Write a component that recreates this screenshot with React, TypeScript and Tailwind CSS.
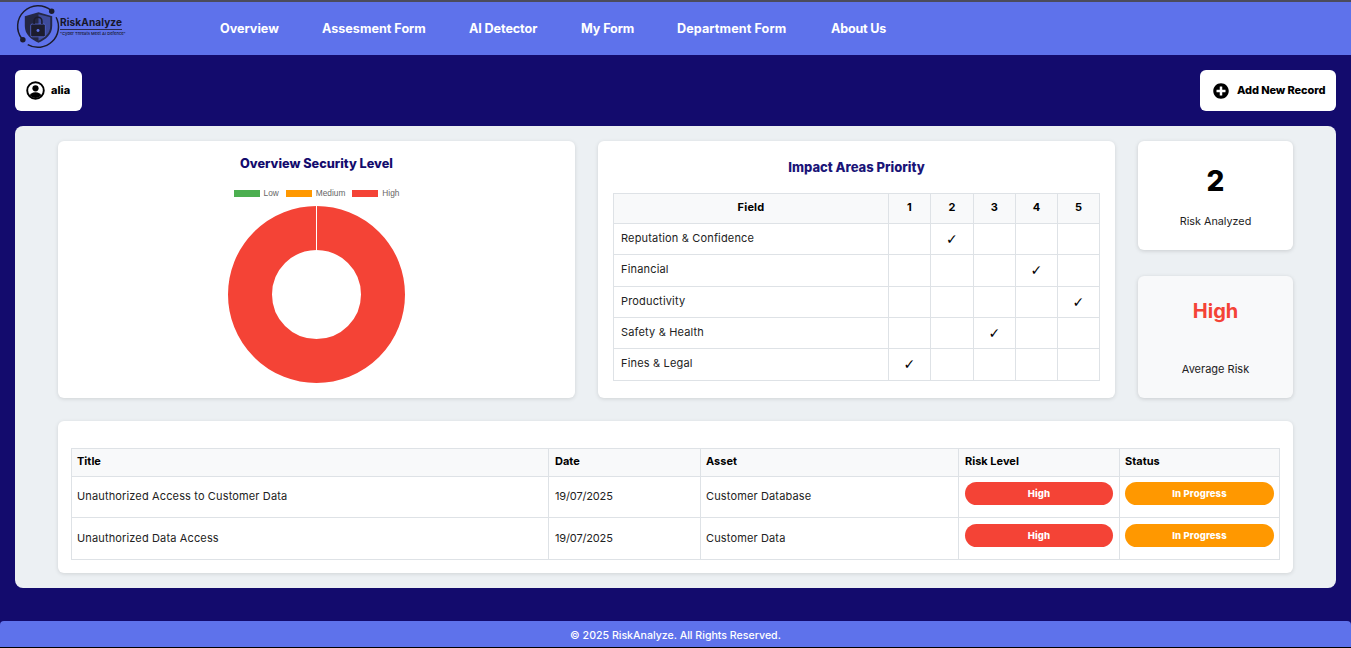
import React from "react";
import { FaPlusCircle } from "react-icons/fa";

const F = "[font-family:Inter,'Noto_Sans',sans-serif]";
const navItems = [
  ["Overview", "w-[59px]", ""],
  ["Assesment Form", "w-[104px]", ""],
  ["AI Detector", "w-[69px]", "tracking-[-0.1px]"],
  ["My Form", "w-[53px]", "tracking-[-0.1px]"],
  ["Department Form", "w-[111px]", "tracking-[0.1px]"],
  ["About Us", "w-[55px]", "tracking-[-0.2px]"],
];
const impact: [string, number, string][] = [
  ["Reputation & Confidence", 2, "h-[31px]"],
  ["Financial", 4, "h-[32px]"],
  ["Productivity", 5, "h-[31px]"],
  ["Safety & Health", 3, "h-[31px]"],
  ["Fines & Legal", 1, "h-[32px]"],
];
const records = [
  ["Unauthorized Access to Customer Data", "19/07/2025", "Customer Database", "h-[41px]", "pt-[5px]", "pb-[2px]"],
  ["Unauthorized Data Access", "19/07/2025", "Customer Data", "h-[42px]", "pt-[6px]", "pb-0"],
];

function Logo() {
  return (
    <div className="flex items-center w-[110px] h-[46px] ml-[16px] mt-[-4px]">
      <svg width="45" height="46" viewBox="0 0 46 46" className="shrink-0" fill="none">
        <path d="M6 35A21 21 0 0 1 36 6" stroke="#1c1c2e" strokeWidth="1.5" />
        <path d="M41 13A21 21 0 0 1 12 41" stroke="#1c1c2e" strokeWidth="1.5" />
        <circle cx="36.5" cy="7" r="2.8" fill="#1c1c2e" />
        <circle cx="7" cy="36" r="2.8" fill="#1c1c2e" />
        <path d="M23 8l14 4v10c0 9-7 14-14 17-7-3-14-8-14-17V12z" fill="#1c1c2e" fillOpacity="0.88" />
        <path d="M23 10v27c7-3 12-8 12-15V13z" fill="#4a5bc0" fillOpacity="0.7" />
        <rect x="15" y="20" width="15" height="13" rx="1.5" fill="#1c1c2e" stroke="#5e72eb" strokeWidth="0.7" />
        <path d="M18.5 20v-3a4 4 0 0 1 8 0v3" stroke="#1c1c2e" strokeWidth="1.6" />
        <circle cx="22.5" cy="26.5" r="1.5" fill="#5e72eb" />
      </svg>
      <div className="ml-[-1px] mt-[-1px] flex flex-col whitespace-nowrap">
        <span className="text-[10.1px] leading-[12px] font-bold text-[#16162a] border-b border-[#2a2a50] pb-[1px] tracking-[0.1px] self-start">RiskAnalyze</span>
        <span className="text-[4.1px] leading-[7px] font-medium text-[#16162a]">"Cyber Threats Meet AI Defence"</span>
      </div>
    </div>
  );
}

function UserIcon() {
  return (
    <svg width="19" height="19" viewBox="0 0 19 19" className="shrink-0">
      <defs>
        <clipPath id="userClip">
          <circle cx="9.5" cy="9.5" r="7.5" />
        </clipPath>
      </defs>
      <circle cx="9.5" cy="9.5" r="8.3" fill="#ffffff" stroke="#000000" strokeWidth="1.9" />
      <circle cx="9.5" cy="7.3" r="3.1" fill="#000000" />
      <ellipse cx="9.5" cy="15.5" rx="6" ry="4.2" fill="#000000" clipPath="url(#userClip)" />
    </svg>
  );
}

function Donut() {
  return (
    <svg width="177" height="177" viewBox="0 0 177 177" className="mt-[9px] block">
      <circle cx="88.5" cy="88.5" r="66.5" fill="none" stroke="#f44336" strokeWidth="44" />
      <line x1="88.5" y1="0" x2="88.5" y2="44.5" stroke="#ffffff" strokeWidth="1" />
    </svg>
  );
}

export default function App() {
  return (
    <div className={`${F} h-[648px] overflow-hidden bg-[#130b6d] flex flex-col`}>
      <header className="h-[55px] shrink-0 bg-[#5e72eb] border-t-2 border-[#4b4b5c] flex items-center">
        <Logo />
        <nav className="ml-[94px] flex gap-[43px] text-[12.6px] font-bold text-white mt-[1px]">
          {navItems.map(([n, w, t]) => (
            <span key={n} className={`${w} ${t} whitespace-nowrap`}>{n}</span>
          ))}
        </nav>
      </header>

      <div className="px-[15px] pt-[15px] flex justify-between">
        <div className="h-[41px] w-[67px] bg-white rounded-[6px] flex items-center pl-[11px] gap-[6px] text-[11px] font-extrabold text-black">
          <UserIcon />
          <span>alia</span>
        </div>
        <div className="h-[41px] w-[136px] bg-white rounded-[6px] flex items-center pl-[13px] gap-[8px] text-[11px] font-extrabold text-black whitespace-nowrap">
          <FaPlusCircle className="text-[16px]" />
          <span className="tracking-[-0.1px]">Add New Record</span>
        </div>
      </div>

      <main className="mx-[15px] mt-[15px] h-[462px] bg-[#ecf0f3] rounded-[8px] px-[43px] pt-[15px]">
        <div className="flex gap-[23px] h-[257px]">
          <section className="w-[517px] bg-white rounded-[6px] shadow-[0_1px_4px_rgba(0,0,0,0.12)] flex flex-col items-center pt-[15px]">
            <h2 className="text-[12.7px] leading-[16px] font-extrabold text-[#130b6d]">Overview Security Level</h2>
            <div className="mt-[17px] flex items-center h-[8px] text-[8.3px] text-[#666] [font-family:'Liberation_Sans',sans-serif]">
              <i className="block w-[26px] h-[7px] bg-[#4caf50]" />
              <span className="ml-[4px]">Low</span>
              <i className="block ml-[7px] w-[26px] h-[7px] bg-[#ff9800]" />
              <span className="ml-[4px]">Medium</span>
              <i className="block ml-[7px] w-[26px] h-[7px] bg-[#f44336]" />
              <span className="ml-[4px]">High</span>
            </div>
            <Donut />
          </section>

          <section className="w-[517px] bg-white rounded-[6px] shadow-[0_1px_4px_rgba(0,0,0,0.12)] px-[15px] pt-[18px]">
            <h2 className="text-center text-[13px] leading-[16px] font-extrabold text-[#1a1478]">Impact Areas Priority</h2>
            <table className="mt-[18px] w-[486px] table-fixed border-collapse text-[11px] text-[#222] tracking-[0.17px]">
              <colgroup>
                <col className="w-[275px]" />
                <col className="w-[42px]" />
                <col className="w-[43px]" />
                <col className="w-[42px]" />
                <col className="w-[42px]" />
                <col className="w-[42px]" />
              </colgroup>
              <thead>
                <tr className="h-[30px] bg-[#f8f9fa] text-black">
                  {["Field", "1", "2", "3", "4", "5"].map((h) => (
                    <th key={h} className="border border-[#dee2e6] font-bold pt-0 px-0 pb-[2px]">{h}</th>
                  ))}
                </tr>
              </thead>
              <tbody>
                {impact.map(([f, n, h]) => (
                  <tr key={f} className={h}>
                    <td className="border border-[#dee2e6] pl-[7px] pr-0 pt-0 pb-[2px]">{f}</td>
                    {[1, 2, 3, 4, 5].map((i) => (
                      <td key={i} className="border border-[#dee2e6] text-center p-0 text-[14px] text-black [font-family:'DejaVu_Sans',sans-serif]">
                        {i === n ? "✓" : ""}
                      </td>
                    ))}
                  </tr>
                ))}
              </tbody>
            </table>
          </section>

          <div className="flex-1 flex flex-col gap-[26px]">
            <div className="h-[109px] bg-white rounded-[6px] shadow-[0_1px_4px_rgba(0,0,0,0.15)] flex flex-col items-center pt-[23px]">
              <div className="text-[28px] leading-[34px] font-extrabold text-black">2</div>
              <div className="mt-[17px] text-[10.8px] leading-[14px] text-[#222]">Risk Analyzed</div>
            </div>
            <div className="h-[122px] bg-[#f8f9fa] rounded-[6px] shadow-[0_1px_4px_rgba(0,0,0,0.15)] flex flex-col items-center pt-[21px]">
              <div className="text-[20px] leading-[28px] font-bold text-[#f44336]">High</div>
              <div className="mt-[37px] text-[11px] leading-[14px] text-[#222]">Average Risk</div>
            </div>
          </div>
        </div>

        <section className="mt-[23px] h-[152px] bg-white rounded-[6px] shadow-[0_1px_4px_rgba(0,0,0,0.12)] px-[13px] pt-[27px]">
          <table className="w-[1208px] table-fixed border-collapse text-[11px] text-[#222]">
            <colgroup>
              <col className="w-[477px]" />
              <col className="w-[152px]" />
              <col className="w-[258px]" />
              <col className="w-[161px]" />
              <col className="w-[160px]" />
            </colgroup>
            <thead>
              <tr className="h-[28px] bg-[#f8f9fa] text-black text-left">
                <th className="border border-[#dee2e6] font-bold pt-0 pb-[2px] pl-[5px] pr-0">Title</th>
                <th className="border border-[#dee2e6] font-bold pt-0 pb-[2px] pl-[6px] pr-0">Date</th>
                <th className="border border-[#dee2e6] font-bold pt-0 pb-[2px] pl-[5px] pr-0">Asset</th>
                <th className="border border-[#dee2e6] font-bold pt-0 pb-[2px] pl-[6px] pr-0">Risk Level</th>
                <th className="border border-[#dee2e6] font-bold pt-0 pb-[2px] pl-[5px] pr-0">Status</th>
              </tr>
            </thead>
            <tbody>
              {records.map(([t, d, a, h, pt, pb]) => (
                <tr key={t} className={`${h} tracking-[0.14px]`}>
                  <td className={`border border-[#dee2e6] pt-0 ${pb} pl-[5px] pr-0`}>{t}</td>
                  <td className={`border border-[#dee2e6] pt-0 ${pb} pl-[6px] pr-0 tracking-[-0.15px]`}>{d}</td>
                  <td className={`border border-[#dee2e6] pt-0 ${pb} pl-[5px] pr-0`}>{a}</td>
                  <td className={`border border-[#dee2e6] align-top ${pt} pb-0 px-[6px]`}>
                    <div className="h-[23px] pt-[1px] rounded-full bg-[#f44336] text-white text-[9.5px] font-extrabold flex items-center justify-center">High</div>
                  </td>
                  <td className={`border border-[#dee2e6] align-top ${pt} pb-0 pl-[5px] pr-[5px]`}>
                    <div className="h-[23px] pt-[1px] rounded-full bg-[#ff9800] text-white text-[9.5px] font-extrabold flex items-center justify-center">In Progress</div>
                  </td>
                </tr>
              ))}
            </tbody>
          </table>
        </section>
      </main>

      <footer className="mt-[33px] h-[27px] shrink-0 bg-[#5e72eb] border-b border-black rounded-t-[4px] pt-[3px] flex items-center justify-center text-[10.6px] font-medium text-white">
        © 2025 RiskAnalyze. All Rights Reserved.
      </footer>
    </div>
  );
}
